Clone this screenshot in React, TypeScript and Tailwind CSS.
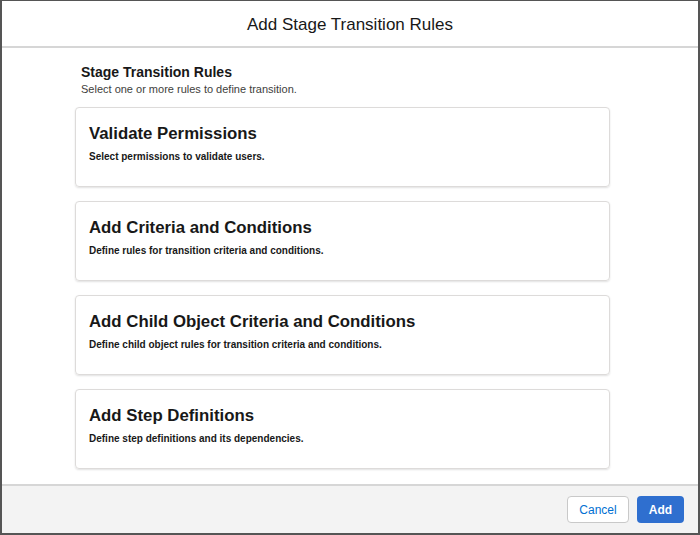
const rules = [
  { title: 'Validate Permissions', desc: 'Select permissions to validate users.' },
  { title: 'Add Criteria and Conditions', desc: 'Define rules for transition criteria and conditions.' },
  { title: 'Add Child Object Criteria and Conditions', desc: 'Define child object rules for transition criteria and conditions.' },
  { title: 'Add Step Definitions', desc: 'Define step definitions and its dependencies.' },
];

export default function App() {
  return (
    <div className="w-[700px] h-[535px] bg-white border-2 border-t border-[#555] flex flex-col font-['Liberation_Sans',Arial,sans-serif] text-[#181818]">
      <div className="h-[47px] shrink-0 flex items-center justify-center border-b-2 border-[#d6d6d6] pt-[3px]">
        <h1 className="text-[17px] font-normal">Add Stage Transition Rules</h1>
      </div>
      <div className="flex-1 overflow-hidden pl-[73px] pr-[88px] pt-[15px]">
        <div className="pl-[6px]">
          <h2 className="text-[14px] font-bold leading-[18px]">Stage Transition Rules</h2>
          <p className="text-[11px] leading-[16px] text-[#3e3e3c]">Select one or more rules to define transition.</p>
        </div>
        <div className="mt-[10px] flex flex-col gap-[14px]">
          {rules.map((r) => (
            <div
              key={r.title}
              className="h-[80px] rounded-[4px] border border-[#dddbda] shadow-[0_1px_2px_rgba(0,0,0,0.12)] px-[13px] pt-[14px]"
            >
              <div className="text-[16.8px] font-bold leading-[24px]">{r.title}</div>
              <div className="mt-[4px] text-[10px] font-bold leading-[14px]">{r.desc}</div>
            </div>
          ))}
        </div>
      </div>
      <div className="h-[49px] shrink-0 bg-[#f3f3f3] border-t-2 border-[#d6d6d6] flex items-center justify-end gap-[8px] pr-[14px]">
        <button className="h-[27px] w-[62px] rounded-[4px] border border-[#c9c9c9] bg-white text-[12px] text-[#0070d2]">
          Cancel
        </button>
        <button className="h-[27px] w-[47px] rounded-[4px] bg-[#2f6fcf] text-[12px] font-bold text-white">
          Add
        </button>
      </div>
    </div>
  );
}
